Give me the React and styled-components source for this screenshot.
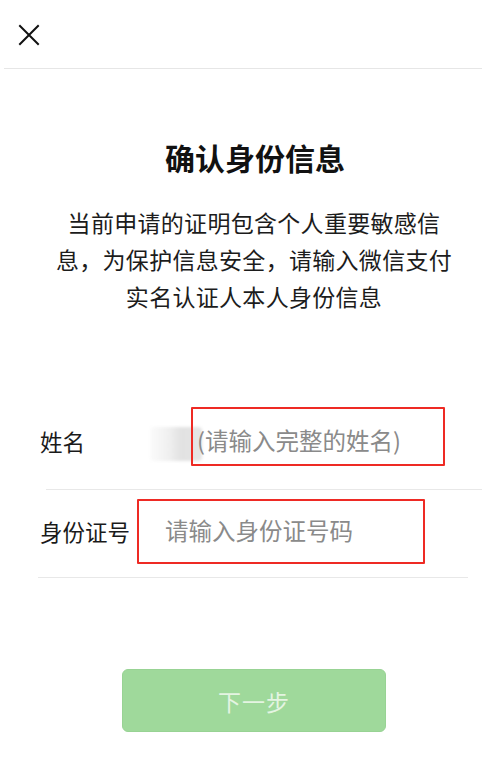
import React from "react";
import styled, { createGlobalStyle } from "styled-components";

const GlobalStyle = createGlobalStyle`
  html, body {
    margin: 0;
    padding: 0;
    background: #fff;
  }
  body {
    font-family: "Noto Sans CJK SC", "Noto Sans", sans-serif;
    color: #111;
  }
`;

const Page = styled.div`
  width: 482px;
  height: 765px;
  overflow: hidden;
  background: #fff;
`;

const Header = styled.div`
  height: 68px;
  margin-left: 4px;
  padding-left: 14px;
  display: flex;
  align-items: center;
  border-bottom: 1px solid #e6e6e6;
  & svg {
    display: block;
    margin-top: 2px;
  }
`;

const Title = styled.h1`
  margin: 67px 0 0 28px;
  font-size: 30px;
  line-height: 42px;
  font-weight: 700;
  text-align: center;
  color: #111;
`;

const Desc = styled.p`
  width: 410px;
  margin: 26px 0 0 49px;
  font-size: 23px;
  line-height: 37px;
  letter-spacing: 0.3px;
  text-align: center;
  color: #1c1c1c;
`;

const Form = styled.div`
  margin-top: 82px;
`;

const Row = styled.div`
  position: relative;
  display: flex;
  align-items: center;
  height: ${(p) => p.h}px;
  padding-left: 40px;
`;

const Divider = styled.div`
  height: 1px;
  background: #e8e8e8;
  margin-left: ${(p) => p.inset}px;
  margin-right: ${(p) => p.right}px;
`;

const Label = styled.span`
  width: ${(p) => p.w}px;
  flex-shrink: 0;
  padding-bottom: 5px;
  font-size: 22.5px;
  color: #1a1a1a;
  white-space: nowrap;
`;

const Field = styled.div`
  position: relative;
  z-index: 1;
  box-sizing: border-box;
  width: ${(p) => p.w}px;
  height: ${(p) => p.h}px;
  margin-bottom: ${(p) => p.lift}px;
  padding-left: ${(p) => p.pad}px;
  padding-top: ${(p) => p.pt || 0}px;
  padding-bottom: ${(p) => p.pb || 0}px;
  display: flex;
  align-items: center;
  border: 2px solid #ee2a24;
  border-radius: 1px;
  font-size: 23.5px;
  color: #8a8a8a;
  white-space: nowrap;
`;

const Smudge = styled.div`
  position: absolute;
  left: 150px;
  top: 30px;
  width: 52px;
  height: 34px;
  background: linear-gradient(90deg, #fbfbfb 0%, #f0f0f0 35%, #e2e2e2 60%, #e4e4e4 100%);
  filter: blur(1.5px);
  border-radius: 4px;
`;

const Footer = styled.div`
  margin-top: 91px;
  padding-left: 122px;
`;

const NextButton = styled.button`
  width: 264px;
  height: 63px;
  border: 1px solid #98d394;
  border-radius: 6px;
  background: #9fd99b;
  color: #e4f4e2;
  font-family: "Noto Sans CJK SC", sans-serif;
  font-size: 23px;
  letter-spacing: 1px;
  cursor: not-allowed;
`;

const CloseIcon = () => (
  <svg width="22" height="22" viewBox="0 0 22 22">
    <path d="M2 2 L20 20 M20 2 L2 20" stroke="#111" strokeWidth="2" strokeLinecap="square" />
  </svg>
);

const App = () => {
  return (
    <Page>
      <GlobalStyle />
      <Header>
        <CloseIcon />
      </Header>
      <Title>确认身份信息</Title>
      <Desc>当前申请的证明包含个人重要敏感信息，为保护信息安全，请输入微信支付实名认证人本人身份信息</Desc>
      <Form>
        <Row h={92}>
          <Label w={151}>姓名</Label>
          <Smudge />
          <Field w={254} h={59} lift={14} pad={4} pt={7}>(请输入完整的姓名)</Field>
        </Row>
        <Divider inset={46} right={0} />
        <Row h={87}>
          <Label w={97}>身份证号</Label>
          <Field w={288} h={65} lift={5} pad={26} pb={3}>请输入身份证号码</Field>
        </Row>
        <Divider inset={38} right={14} />
      </Form>
      <Footer>
        <NextButton>下一步</NextButton>
      </Footer>
    </Page>
  );
};

export default App;
